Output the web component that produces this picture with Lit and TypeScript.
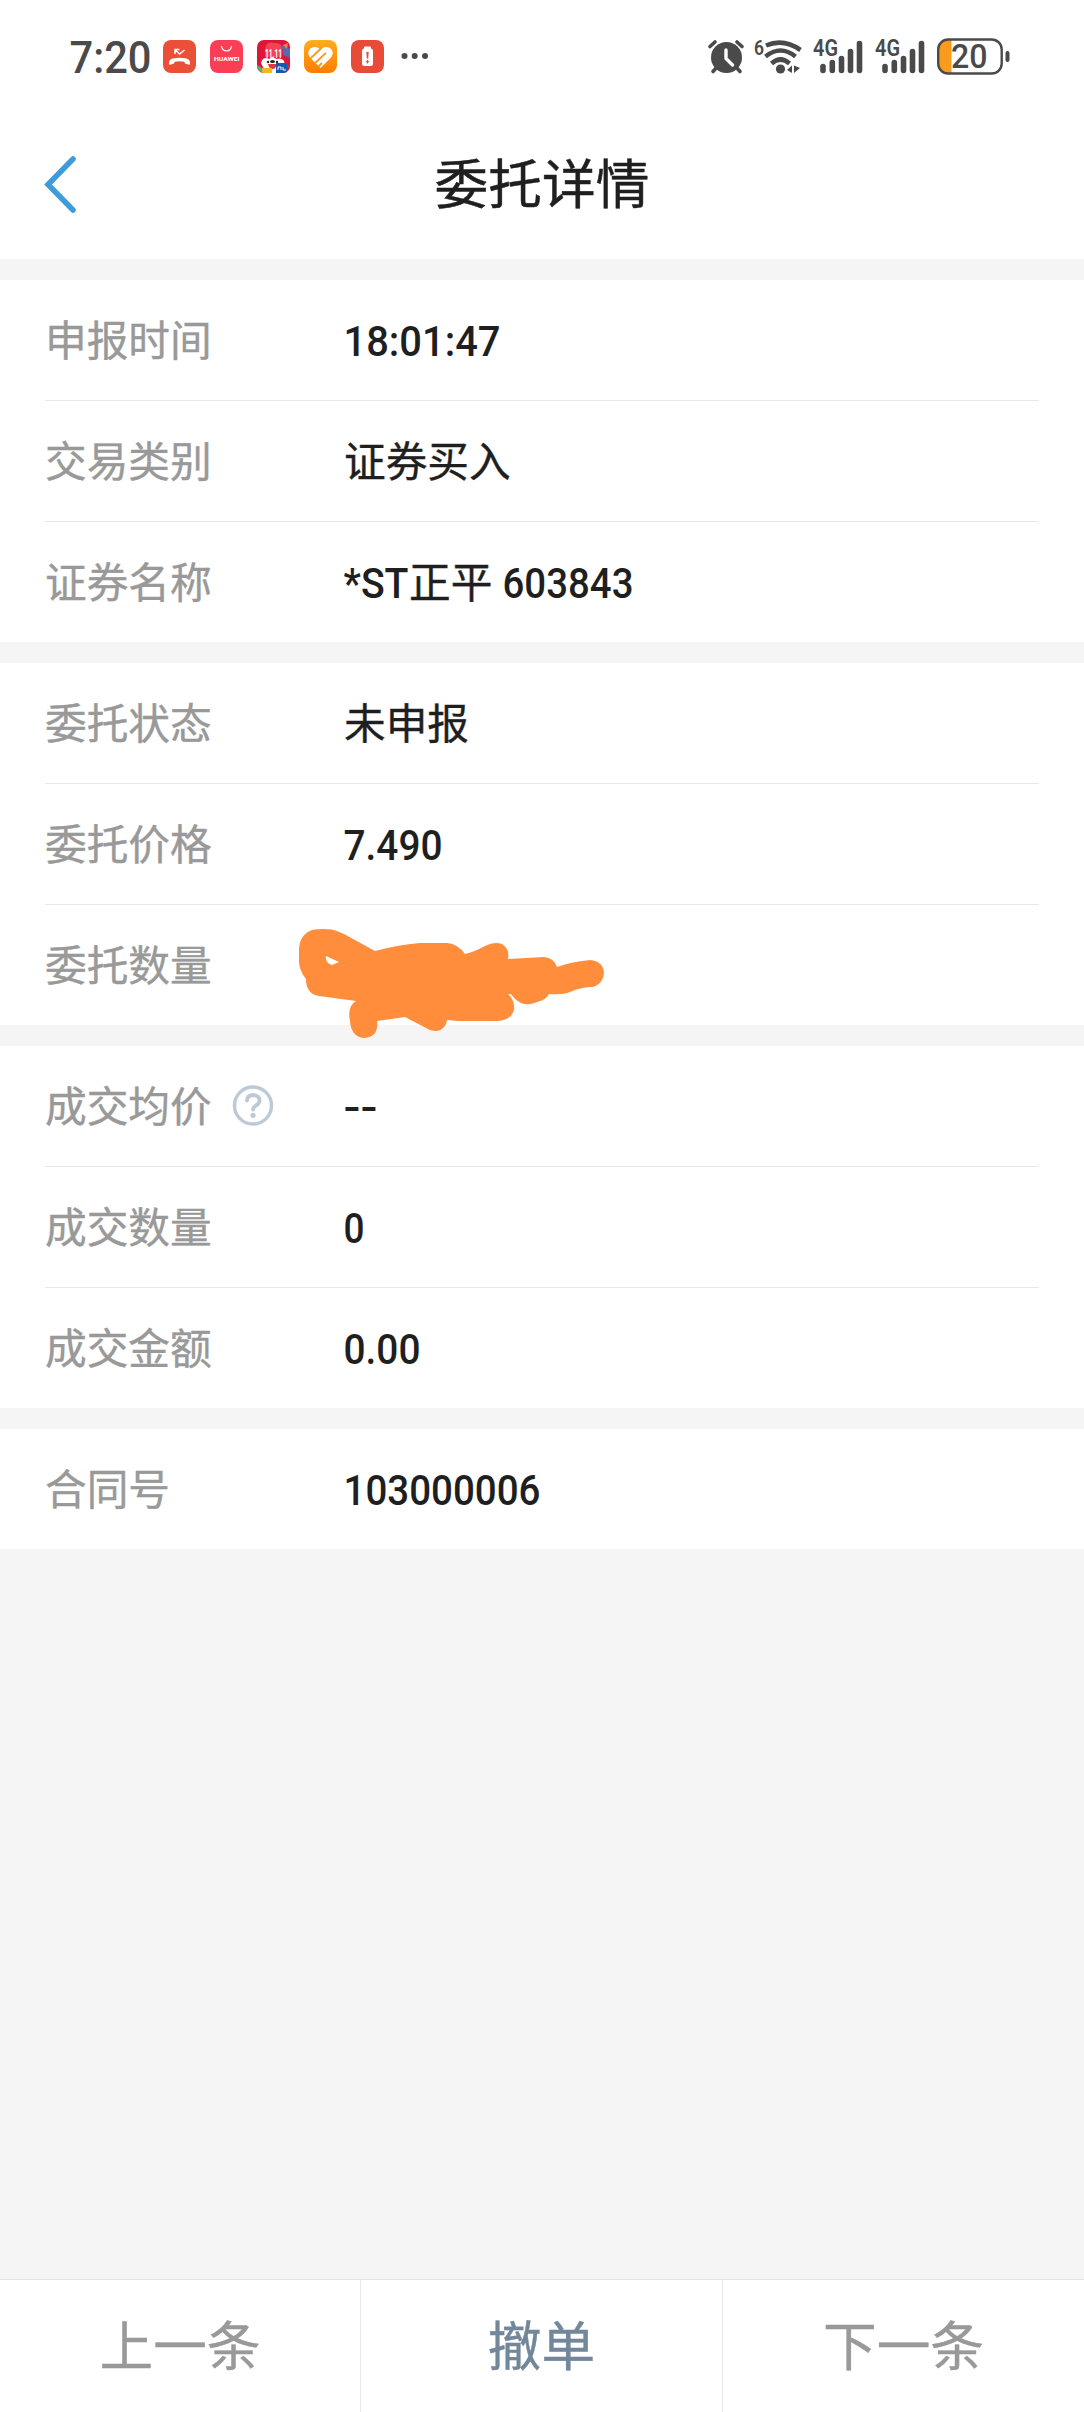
import { LitElement, html, css } from "lit";
import { customElement } from "lit/decorators.js";

interface Segment { text: string; width?: number; gap?: boolean }
interface Row { label: string; value: Segment[]; help?: boolean; scribble?: boolean }

const groups: Row[][] = [
  [
    { label: "申报时间", value: [{ text: "18:01:47", width: 157 }] },
    { label: "交易类别", value: [{ text: "证券买入" }] },
    { label: "证券名称", value: [{ text: "*ST", width: 65 }, { text: "正平" }, { text: "603843", width: 131, gap: true }] },
  ],
  [
    { label: "委托状态", value: [{ text: "未申报" }] },
    { label: "委托价格", value: [{ text: "7.490", width: 99 }] },
    { label: "委托数量", value: [], scribble: true },
  ],
  [
    { label: "成交均价", value: [{ text: "--", width: 34 }], help: true },
    { label: "成交数量", value: [{ text: "0", width: 21 }] },
    { label: "成交金额", value: [{ text: "0.00", width: 77 }] },
  ],
  [{ label: "合同号", value: [{ text: "103000006", width: 197 }] }],
];

@customElement("app-root")
export class AppRoot extends LitElement {
  static styles = css`
    :host {
      display: flex;
      flex-direction: column;
      width: 1084px;
      height: 2412px;
      background: #f5f5f5;
      color: #1f1f1f;
      font-family: Roboto, "Noto Sans CJK SC", sans-serif;
      font-size: 41.7px;
      overflow: hidden;
    }
    svg { display: block; overflow: visible; flex: none; }
    .status {
      display: flex;
      align-items: center;
      height: 113px;
      background: #fff;
      box-sizing: border-box;
      padding: 0 74px 0 69px;
      color: #4a4a4a;
    }
    .left { display: flex; align-items: center; gap: 14px; }
    .right { display: flex; align-items: center; margin-left: auto; }
    .alarm { margin-right: 10px; }
    .wifi { margin-right: 11px; }
    .signal { margin-right: 12px; }
    .dots { margin-left: 3px; }
    .header {
      display: grid;
      grid-template-columns: 200px 1fr 200px;
      align-items: center;
      height: 146px;
      padding-bottom: 5px;
      box-sizing: border-box;
      background: #fff;
      margin-bottom: 21px;
    }
    .back { margin-left: 44px; }
    .title { text-align: center; font-size: 53.7px; line-height: 80px; padding-top: 5px; -webkit-text-stroke: 0.5px; }
    .group { background: #fff; padding: 0 45px; margin-bottom: 21px; }
    .row {
      display: flex;
      align-items: center;
      height: 121px;
      box-sizing: border-box;
      border-bottom: 1px solid #e8e8e8;
      line-height: 60px;
    }
    .row:last-child { border-bottom: 0; height: 120px; }
    .label { display: flex; align-items: center; width: 299px; color: #999; flex: none; white-space: nowrap; }
    .cjk { padding-top: 4px; -webkit-text-stroke: 0.4px; }
    .help { margin-left: 21px; }
    .value { display: flex; align-items: center; white-space: pre; }
    .latin { font-weight: 500; font-size: 42.2px; }
    .spaced { margin-left: 11px; }
    .hidden-value { position: relative; width: 0; height: 0; }
    .scribble { position: absolute; left: -48px; top: -38px; }
    .footer {
      margin-top: auto;
      display: grid;
      grid-template-columns: 361px 362px 361px;
      height: 133px;
      box-sizing: border-box;
      border-top: 1px solid #e5e5e5;
      background: #fff;
      font-size: 53.7px;
      color: #999;
      -webkit-text-stroke: 0.4px;
    }
    .tab {
      display: flex;
      align-items: center;
      justify-content: center;
      border-right: 1px solid #e8e8e8;
      line-height: 80px;
      padding-top: 3px;
    }
    .tab:last-child { border-right: 0; }
    .primary { color: #73879b; }
  `;

  private latin(s: Segment) {
    return html`<svg class="latin ${s.gap ? "spaced" : ""}" width=${s.width!} height="60">
      <text x="-0.5" y="46" fill="#1f1f1f" textLength=${s.width!} lengthAdjust="spacingAndGlyphs">${s.text}</text>
    </svg>`;
  }

  private signal() {
    return html`<svg class="signal" width="50" height="36" viewBox="0 0 50 36">
      <text x="0" y="17" font-size="23" font-weight="600" fill="#4a4a4a" textLength="25" lengthAdjust="spacingAndGlyphs">4G</text>
      <path d="M10 27.500V31.500M19.300 23.500V31.500M28.500 19.500V31.500M37.500 12.500V31.500M46.500 4.500V31.500" stroke="#4a4a4a" stroke-width="5.6" stroke-linecap="round" />
    </svg>`;
  }

  private statusBar() {
    return html`<div class="status">
      <div class="left">
        <svg width="80" height="40"><text x="0.5" y="36" font-size="44" font-weight="500" fill="#4a4a4a" textLength="82" lengthAdjust="spacingAndGlyphs">7:20</text></svg>
        <svg width="33" height="33" viewBox="0 0 33 33">
          <rect width="33" height="33" rx="8" fill="#ec4f38" />
          <path d="M6 22.500Q6 19 11 18.300Q16.500 17.300 22 18.300Q27 19 27 22.500V24Q27 25 26 24.700L22.500 23.800Q21.500 23.500 21.300 21.800Q16.500 20.800 11.700 21.800Q11.500 23.500 10.500 23.800L7 24.700Q6 25 6 24Z" fill="#fff" />
          <path d="M12 14V9.500H16.500M12.300 9.800L16.500 14L21.500 10" fill="none" stroke="#fff" stroke-width="1.500" />
        </svg>
        <svg width="33" height="33" viewBox="0 0 33 33">
          <rect width="33" height="33" rx="8" fill="#fa3e55" />
          <path d="M11.500 6A5 5 0 0 0 21.500 6" fill="none" stroke="#fff" stroke-width="1.200" />
          <text x="4" y="21.300" font-size="6" font-weight="700" fill="#fff" textLength="25.500" lengthAdjust="spacingAndGlyphs">HUAWEI</text>
        </svg>
        <svg width="33" height="33" viewBox="0 0 33 33">
          <defs><clipPath id="app"><rect width="33" height="33" rx="7" /></clipPath></defs>
          <g clip-path="url(#app)">
            <rect width="33" height="33" fill="#de1738" />
            <path d="M25 5L33 9V18L26 15Z" fill="#5569b5" />
            <path d="M26 5L31 3L30 9Z" fill="#ef8352" />
            <path d="M8 9Q9 1 17 3Q26 2 25 10V17H8Z" fill="#f04353" />
            <path d="M4 23Q6 16 12 19L15 17L20 19Q27 17 28 25L24 33H9Z" fill="#fff" />
            <text x="8" y="18" font-size="12" font-weight="700" fill="#fff" textLength="17" lengthAdjust="spacingAndGlyphs">11.11</text>
            <circle cx="11" cy="22" r="1.200" fill="#222" /><circle cx="20" cy="22" r="1.200" fill="#222" />
            <ellipse cx="15.500" cy="21.500" rx="2.500" ry="1.500" fill="#222" />
            <path d="M11 24H20Q19 29 15.500 29T11 24Z" fill="#e53343" />
            <rect x="5" y="28" width="10" height="5" fill="#f7b525" />
            <path d="M0 25L5 28V33H0Z" fill="#55ad79" />
            <rect x="19" y="23" width="11" height="10" fill="#1558ad" />
            <path d="M21 30V27H24V30M26 27V30H29" stroke="#fff" fill="none" />
          </g>
        </svg>
        <svg width="33" height="33" viewBox="0 0 33 33">
          <defs><linearGradient id="health" x2="0" y2="1"><stop stop-color="#ffad20" /><stop offset="1" stop-color="#ff7d00" /></linearGradient></defs>
          <rect width="33" height="33" rx="8" fill="url(#health)" />
          <path d="M16.500 28L6 17.500Q2.500 12.500 6 8.800Q11 5 16.500 9.500Q22 5 27 8.800Q30.500 12.500 27 17.500Z" fill="#fff" />
          <path d="M6 18.800L17.500 8M10.500 23.500L22 12.800M14 27L18 23" fill="none" stroke="#ff9610" stroke-width="1.800" />
        </svg>
        <svg width="33" height="33" viewBox="0 0 33 33">
          <rect width="33" height="33" rx="8" fill="#e84c39" />
          <rect x="13" y="6.500" width="7" height="3" rx="1" fill="#fff" />
          <rect x="11" y="8.500" width="11" height="17.500" rx="2.500" fill="#fff" />
          <path d="M15.300 12H17.700L17.200 18.500H15.800Z" fill="#e84c39" />
          <path d="M16.500 20V23.500M14.800 21.750H18.200" stroke="#e84c39" stroke-width="1.200" />
        </svg>
        <svg class="dots" width="27" height="7" viewBox="0 0 27 7"><g fill="#4a4a4a"><circle cx="3.500" cy="3" r="3" /><circle cx="13.700" cy="3" r="3" /><circle cx="24" cy="3" r="3" /></g></svg>
      </div>
      <div class="right">
        <svg class="alarm" width="36" height="36" viewBox="0 0 36 36">
          <g stroke="#4a4a4a" stroke-width="3.600" stroke-linecap="round"><path d="M2 7.500L7 3M29 3L34 7.500M9 28L5 32.500M28 28L32 32.500" /></g>
          <circle cx="18.500" cy="18.500" r="15.500" fill="#4a4a4a" />
          <path d="M18 11V19.500L24.500 26" fill="none" stroke="#fff" stroke-width="3.400" stroke-linecap="round" stroke-linejoin="round" />
        </svg>
        <svg class="wifi" width="48" height="36" viewBox="0 0 48 36">
          <text x="0" y="15.500" font-size="21" font-weight="600" fill="#4a4a4a" textLength="10" lengthAdjust="spacingAndGlyphs">6</text>
          <g fill="none" stroke="#4a4a4a" stroke-width="4.600"><path d="M12 6.500Q29.500-1 46.500 11" /><path d="M11.500 17.500Q26.500 5.500 41.500 17.500" /><path d="M17.500 24.500Q26.500 16.500 35.500 24.500" /></g>
          <circle cx="26.500" cy="30" r="4.600" fill="#4a4a4a" />
          <path d="M38 26.500V34L33 31ZM40 26.500V34L46 29Z" fill="#4a4a4a" />
        </svg>
        ${this.signal()}${this.signal()}
        <svg width="73" height="37" viewBox="0 0 73 37">
          <path d="M14.500 2H9.500Q1.500 2 1.500 11V26Q1.500 35 9.500 35H14.500Z" fill="#f99b1c" />
          <rect x="1.200" y="1.500" width="63.500" height="34" rx="10" fill="none" stroke="#4a4a4a" stroke-width="2.400" />
          <rect x="68.500" y="13" width="4" height="11" rx="2" fill="#4a4a4a" />
          <text x="14" y="29.500" font-size="33" font-weight="500" fill="#4a4a4a" textLength="36.500" lengthAdjust="spacingAndGlyphs">20</text>
        </svg>
      </div>
    </div>`;
  }

  private scribble() {
    return html`<div class="hidden-value"><svg class="scribble" width="310" height="112" viewBox="296 927 310 112">
      <path fill="#ff8d3b" fill-rule="evenodd" d="M299 949Q300 933 314 929.500Q323 928.500 332 929.500Q338 931 344 934L375 951Q397 945 420 943H447Q458 944 465 954Q474 952 485 946Q494 941 502 944Q510 949 508 959L544 957Q554 958 557 967Q570 962 590 960Q603 961 604 973Q603 984 593 987Q581 987 570 992Q563 995 549 994Q546 1000 537 1002Q528 1006 521 1003Q515 1000 511 994H508Q515 1000 514 1010Q511 1020 498 1021H458L447 1020Q446 1029 437 1031Q430 1031 426 1028L405 1017L377 1021Q379 1038 363 1038Q351 1036 350 1021Q347 1006 356 1001L319 996Q306 994 306 979Q299 970 299 961ZM326 956Q325 963 332 965L339 962Z" />
    </svg></div>`;
  }

  render() {
    return html`
      ${this.statusBar()}
      <header class="header">
        <svg class="back" width="34" height="56" viewBox="0 0 34 56"><path d="M29 3L4 28.500L29 54" fill="none" stroke="#3e9bdc" stroke-width="5.500" stroke-linecap="round" stroke-linejoin="miter" /></svg>
        <div class="title">委托详情</div>
      </header>
      ${groups.map((g) => html`<section class="group">${g.map((r) => html`<div class="row">
        <div class="label"><span class="cjk">${r.label}</span>${r.help ? html`<svg class="help" width="40" height="40" viewBox="0 0 40 40">
          <circle cx="20" cy="19.500" r="18.500" fill="none" stroke="#bcc9d6" stroke-width="3.400" />
          <path d="M14 14.500Q14.500 9 20.300 9Q26.500 9.300 26.500 14.500Q26.500 17.500 23 19.500Q20 21.500 20 23.500" fill="none" stroke="#bcc9d6" stroke-width="3.800" stroke-linecap="round" />
          <circle cx="20" cy="29.300" r="2.600" fill="#bcc9d6" />
        </svg>` : ""}</div>
        <div class="value">${r.value.map((s) => (s.width ? this.latin(s) : html`<span class="cjk">${s.text}</span>`))}${r.scribble ? this.scribble() : ""}</div>
      </div>`)}</section>`)}
      <footer class="footer">
        <div class="tab">上一条</div><div class="tab primary">撤单</div><div class="tab">下一条</div>
      </footer>`;
  }
}
